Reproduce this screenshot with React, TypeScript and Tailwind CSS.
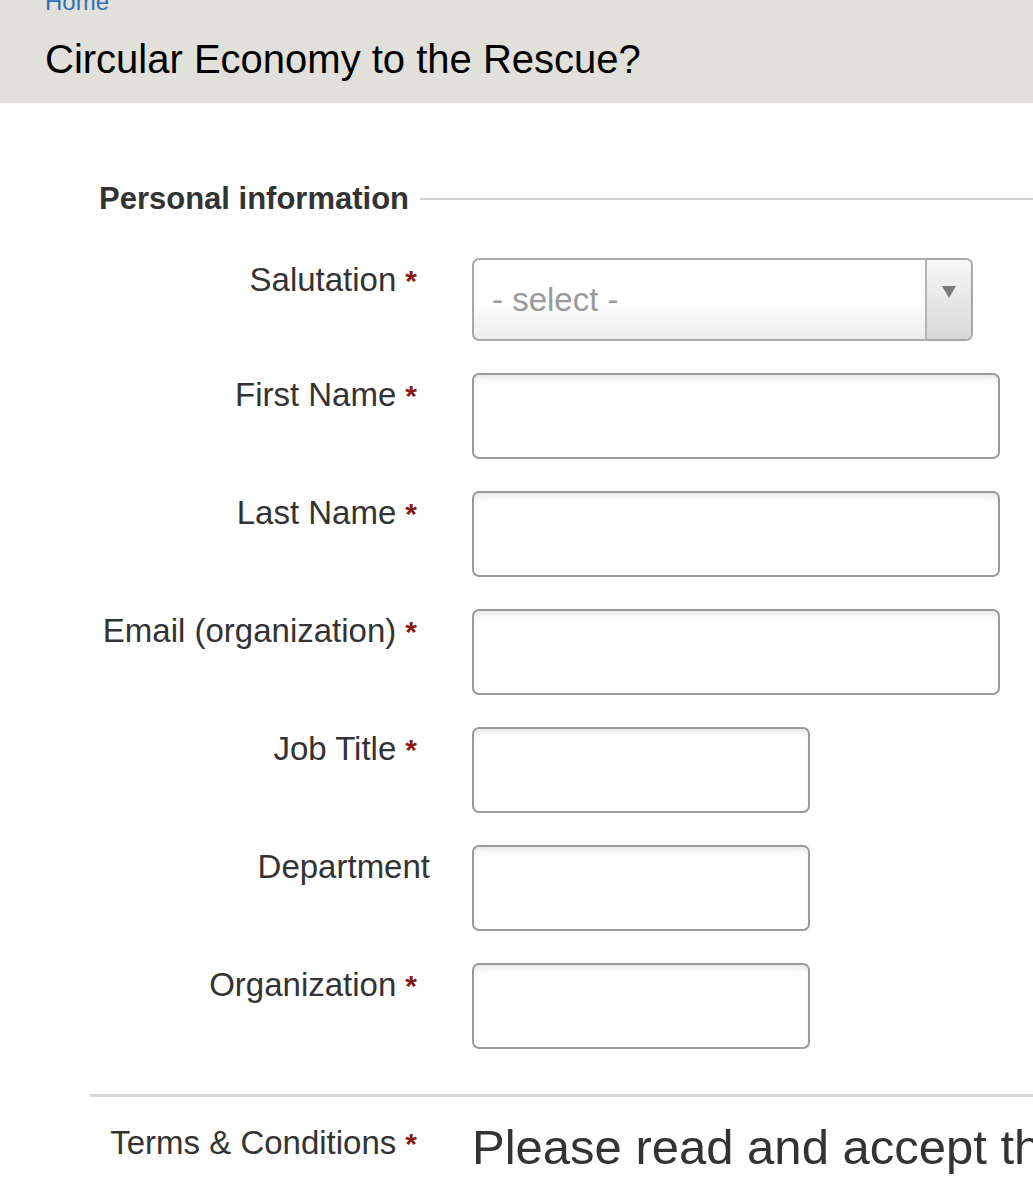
import * as React from "react";

const font = { fontFamily: '"Liberation Sans", Arial, Helvetica, sans-serif' };

type Field = { label: string; required: boolean; width: "full" | "short" };

const fields: Field[] = [
  { label: "First Name", required: true, width: "full" },
  { label: "Last Name", required: true, width: "full" },
  { label: "Email (organization)", required: true, width: "full" },
  { label: "Job Title", required: true, width: "short" },
  { label: "Department", required: false, width: "short" },
  { label: "Organization", required: true, width: "short" },
];

function Label({ text, required }: { text: string; required: boolean }) {
  return (
    <div className="w-[430px] shrink-0 pt-[3px] text-right text-[33px] leading-[38px] text-[#333]">
      {text}
      {required ? (
        <span className="ml-[9px] mr-[13px] text-[30px] font-bold text-[#8b1a10]">*</span>
      ) : null}
    </div>
  );
}

function TextInput({ width }: { width: "full" | "short" }) {
  return (
    <input
      type="text"
      className={
        "h-[86px] rounded-[7px] border-2 border-[#9a9a9a] bg-white shadow-[inset_0_6px_8px_-4px_rgba(0,0,0,0.12)] outline-none " +
        (width === "full" ? "w-[528px]" : "w-[338px]")
      }
    />
  );
}

export default function App() {
  return (
    <div className="min-h-screen overflow-hidden bg-white" style={font}>
      <header className="h-[103px] overflow-hidden bg-[#e1e0da] pl-[45px]">
        <a href="#" className="-mt-[12px] block text-[24px] leading-[28px] text-[#2f6fb7]">
          Home
        </a>
        <h1 className="mt-[20px] text-[40px] leading-[46px] text-black">
          Circular Economy to the Rescue?
        </h1>
      </header>

      <form className="pl-[90px] pt-[78px]">
        <div className="flex items-center">
          <span className="pl-[9px] pr-[11px] text-[31px] font-bold leading-[36px] text-[#333]">
            Personal information
          </span>
          <div className="h-[2px] flex-1 bg-[#d2d2d2]" />
        </div>

        <div className="-ml-[90px] mt-[41px] flex flex-col gap-[32px]">
          <div className="flex items-start gap-[42px]">
            <Label text="Salutation" required />
            <div className="flex h-[83px] w-[501px] overflow-hidden rounded-[7px] border-2 border-[#a8a8a8] bg-gradient-to-b from-white via-white to-[#ececec]">
              <div className="flex flex-1 items-center pl-[18px] text-[33px] text-[#9a9a9a]">
                - select -
              </div>
              <div className="flex w-[46px] justify-center border-l-2 border-[#b4b4b4] bg-gradient-to-b from-[#f7f7f7] to-[#d8d8d8] pt-[26px]">
                <svg width="14" height="12" viewBox="0 0 14 12">
                  <path d="M0 0 H14 L7 12 Z" fill="#7a7a7a" />
                </svg>
              </div>
            </div>
          </div>

          {fields.map((f) => (
            <div key={f.label} className="flex items-start gap-[42px]">
              <Label text={f.label} required={f.required} />
              <TextInput width={f.width} />
            </div>
          ))}
        </div>

        <div className="mt-[45px] h-[3px] bg-[#d6d6d6]" />

        <div className="-ml-[90px] mt-[22px] flex items-start gap-[55px]">
          <div className="w-[417px] shrink-0 pt-[5px] text-right text-[33px] leading-[38px] text-[#333]">
            Terms &amp; Conditions
            <span className="ml-[9px] text-[30px] font-bold text-[#8b1a10]">*</span>
          </div>
          <div className="whitespace-nowrap text-[49px] leading-[56px] text-[#333]">
            Please read and accept the terms and conditions
          </div>
        </div>
      </form>
    </div>
  );
}
